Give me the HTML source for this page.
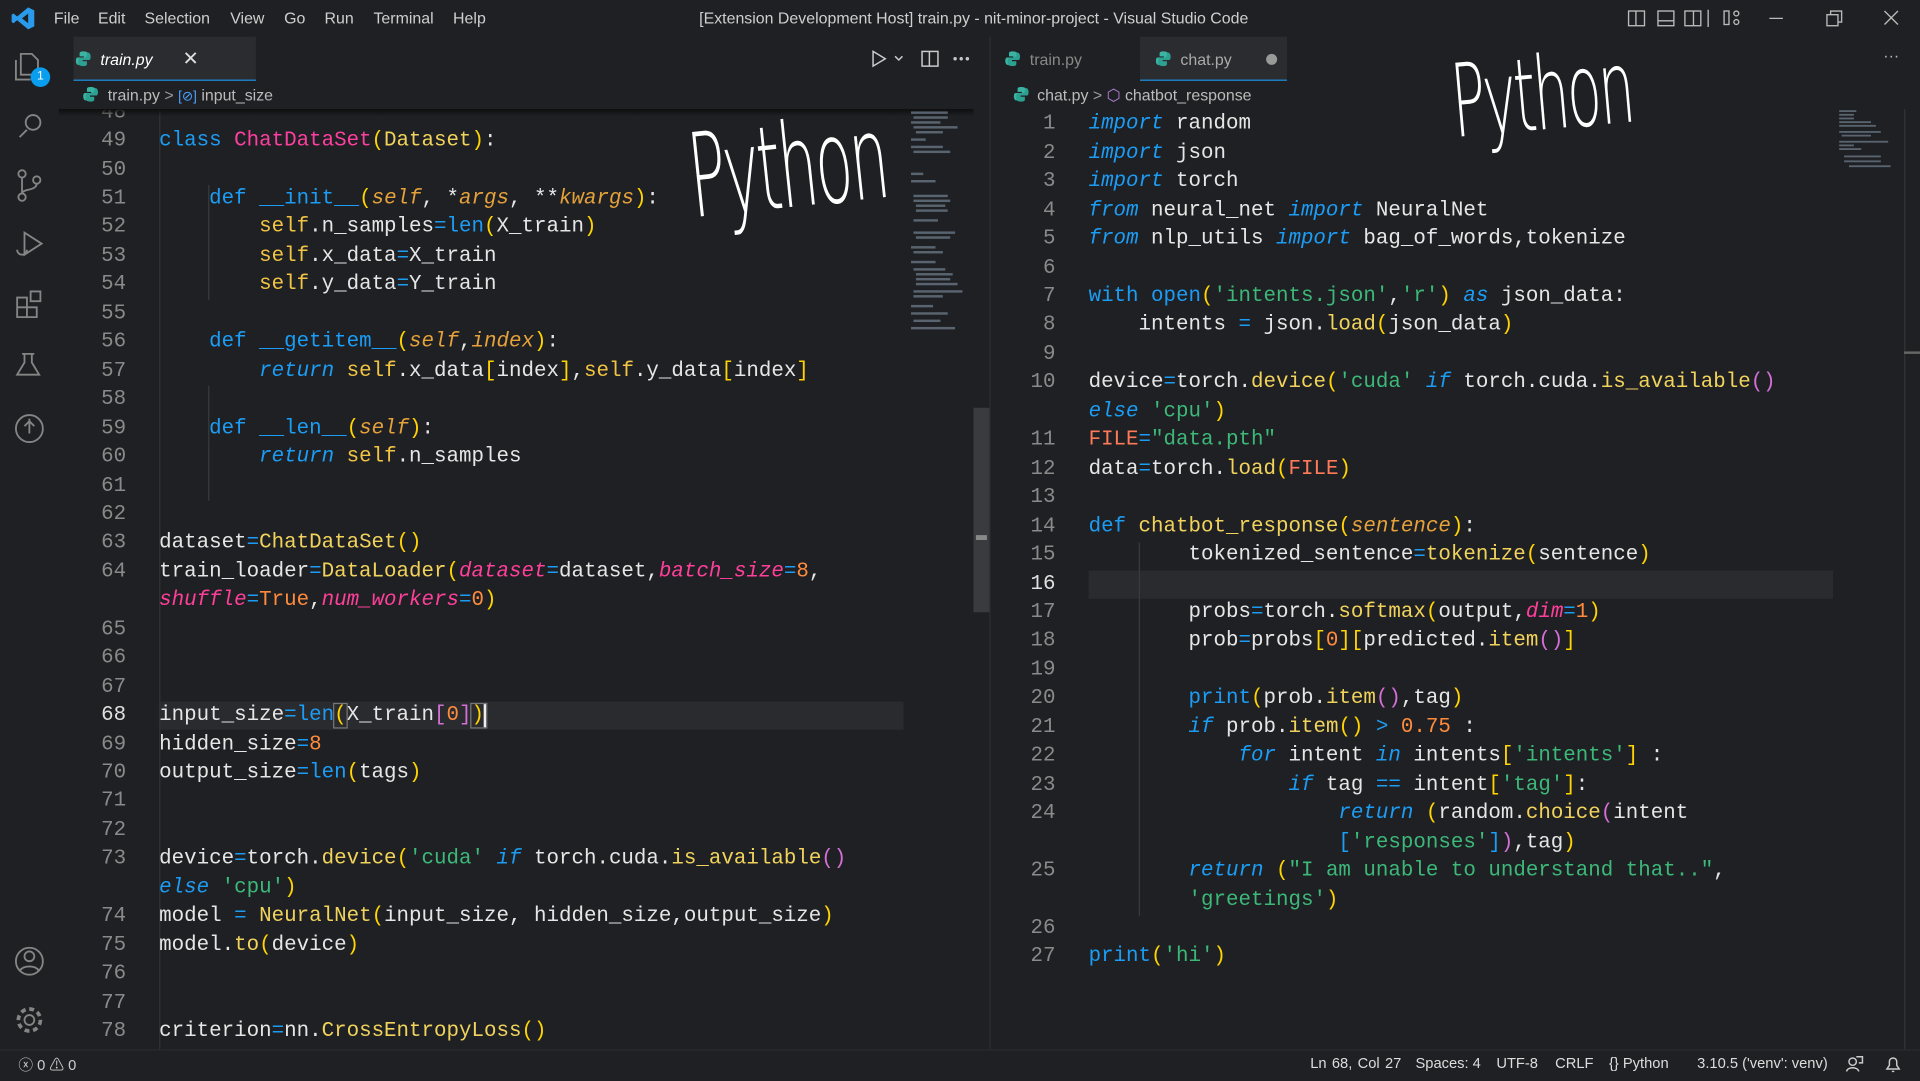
<!DOCTYPE html>
<html><head><meta charset="utf-8">
<style>
html,body{margin:0;padding:0;background:#1f2023;width:1920px;height:1080px;overflow:hidden}
#s{position:absolute;left:0;top:0;width:1568px;height:882px;transform:scale(1.22449);transform-origin:0 0;background:#1f2023;font-family:"Liberation Sans",sans-serif;color:#ccc}
.a{position:absolute}
.ui{font-size:13px;color:#cfcfcf}
pre{margin:0;font-family:"Liberation Mono",monospace;font-size:17px;line-height:23.45px;white-space:pre}
.ln{color:#8a8a8a;text-align:right}
.cur{color:#e0e0e0}
.code{color:#e6e6e6}
.k{color:#1c9df5}.ki{color:#1c9df5;font-style:italic}
.s{color:#f2c444}.p{color:#e6a23a;font-style:italic}
.c{color:#ff3fa0}.f{color:#f1d35c}.st{color:#3cb879}.n{color:#ff8b3d}
.kw{color:#ff3f9a;font-style:italic}.y{color:#ffd400}.m{color:#d36fd6}.b{color:#1c9df5}
.o{color:#1c9df5}.fi{color:#ff7a58}
.hw{font-family:"DejaVu Sans","Liberation Sans",sans-serif;color:#fff;font-weight:200;position:absolute;letter-spacing:-2px;transform-origin:0 0;line-height:1}
svg{position:absolute}
</style></head><body><div id="s">
<!-- title bar -->
<svg style="left:9px;top:5px" width="20" height="20" viewBox="0 0 20 20"><path d="M14 1 L19 3.5 V16.5 L14 19 L5 11.5 L2 14 L0.5 13 V7 L2 6 L5 8.5 Z M14 6 L9 10 L14 14 Z" fill="#2a9bea"/></svg>
<div class="a ui" style="left:44px;top:7px">File</div>
<div class="a ui" style="left:80px;top:7px">Edit</div>
<div class="a ui" style="left:118px;top:7px">Selection</div>
<div class="a ui" style="left:188px;top:7px">View</div>
<div class="a ui" style="left:232px;top:7px">Go</div>
<div class="a ui" style="left:265px;top:7px">Run</div>
<div class="a ui" style="left:305px;top:7px">Terminal</div>
<div class="a ui" style="left:370px;top:7px">Help</div>
<div class="a ui" style="left:571px;top:7px">[Extension Development Host] train.py - nit-minor-project - Visual Studio Code</div>
<svg style="left:1328px;top:7px" width="230" height="16" viewBox="0 0 230 16" fill="none" stroke="#bbb" stroke-width="1.1"><rect x="2" y="2" width="13" height="12"/><line x1="8" y1="2" x2="8" y2="14"/><rect x="26" y="2" width="13" height="12"/><line x1="26" y1="10" x2="39" y2="10"/><rect x="48" y="2" width="13" height="12"/><line x1="55" y1="2" x2="55" y2="14"/><line x1="67" y1="1" x2="67" y2="15"/><rect x="80" y="2" width="4" height="11"/><circle cx="90" cy="4" r="2"/><circle cx="90" cy="11" r="2"/><line x1="117" y1="8" x2="128" y2="8"/><rect x="164" y="5" width="9" height="9"/><path d="M167 5V2h9v9h-3"/><path d="M211 2l11 11M222 2l-11 11"/></svg>

<!-- activity bar -->
<svg style="left:0;top:30px" width="48" height="830" viewBox="0 0 48 830" fill="none" stroke="#858585" stroke-width="1.5">
<path d="M17 14h9l5 5v12H17z M13 19v16h12"/>
<circle cx="27" cy="70" r="6"/><path d="M22 76l-6 6"/>
<circle cx="18" cy="112" r="3"/><circle cx="18" cy="131" r="3"/><circle cx="30" cy="117" r="3"/><path d="M18 115v13M30 120c0 6-12 4-12 8"/>
<path d="M20 160l14 9-14 9z M14 174a4 4 0 1 0 8 0"/>
<path d="M14 213h8v8h-8z M14 221h8v8h-8z M22 221h8v8h-8z M25 208h8v8h-8z"/>
<path d="M20 259v7l-6 10h18l-6-10v-7 M18 259h10"/>
<circle cx="24" cy="320" r="11"/><path d="M24 312v12M20 318l4 -4 4 4"/>
<circle cx="24" cy="755" r="11"/><circle cx="24" cy="751" r="4"/><path d="M16 763c3-5 13-5 16 0"/>
<circle cx="24" cy="803" r="4"/><circle cx="24" cy="803" r="9" stroke-dasharray="4 3" stroke-width="3"/>
</svg>
<div class="a" style="left:25px;top:55px;width:16px;height:16px;border-radius:8px;background:#0a9ef0;color:#fff;font-size:10px;text-align:center;line-height:16px">1</div>

<!-- left editor -->
<div class="a" style="left:48px;top:89px;width:690px;height:768px;overflow:hidden">
 <div class="a" style="left:82px;top:484px;width:608px;height:23px;background:#2a2b2f"></div>
 <div class="a" style="left:82px;top:0;width:1px;height:768px;background:#333"></div>
 <div class="a" style="left:122px;top:62px;width:1px;height:94px;background:#3a3a3a"></div>
 <div class="a" style="left:122px;top:226px;width:1px;height:47px;background:#3a3a3a"></div>
 <div class="a" style="left:122px;top:273px;width:1px;height:47px;background:#3a3a3a"></div>
 <pre class="a ln" style="left:0;top:-8.4px;width:55px">48
49
50
51
52
53
54
55
56
57
58
59
60
61
62
63
64

65
66
67
<span class="cur">68</span>
69
70
71
72
73

74
75
76
77
78</pre>
<pre class="a code" style="left:82px;top:-8.4px">

<span class="k">class</span> <span class="c">ChatDataSet</span><span class="y">(</span><span class="f">Dataset</span><span class="y">)</span>:

    <span class="k">def</span> <span class="k">__init__</span><span class="y">(</span><span class="p">self</span>, *<span class="p">args</span>, **<span class="p">kwargs</span><span class="y">)</span>:
        <span class="s">self</span>.n_samples<span class="o">=</span><span class="k">len</span><span class="y">(</span>X_train<span class="y">)</span>
        <span class="s">self</span>.x_data<span class="o">=</span>X_train
        <span class="s">self</span>.y_data<span class="o">=</span>Y_train

    <span class="k">def</span> <span class="k">__getitem__</span><span class="y">(</span><span class="p">self</span>,<span class="p">index</span><span class="y">)</span>:
        <span class="ki">return</span> <span class="s">self</span>.x_data<span class="y">[</span>index<span class="y">]</span>,<span class="s">self</span>.y_data<span class="y">[</span>index<span class="y">]</span>

    <span class="k">def</span> <span class="k">__len__</span><span class="y">(</span><span class="p">self</span><span class="y">)</span>:
        <span class="ki">return</span> <span class="s">self</span>.n_samples


dataset<span class="o">=</span><span class="f">ChatDataSet</span><span class="y">()</span>
train_loader<span class="o">=</span><span class="f">DataLoader</span><span class="y">(</span><span class="kw">dataset</span><span class="o">=</span>dataset,<span class="kw">batch_size</span><span class="o">=</span><span class="n">8</span>,
<span class="kw">shuffle</span><span class="o">=</span><span class="n">True</span>,<span class="kw">num_workers</span><span class="o">=</span><span class="n">0</span><span class="y">)</span>



input_size<span class="o">=</span><span class="k">len</span><span class="y" style="outline:1px solid #777">(</span>X_train<span class="m">[</span><span class="n">0</span><span class="m">]</span><span class="y" style="outline:1px solid #777;border-right:2px solid #eee">)</span>
hidden_size<span class="o">=</span><span class="n">8</span>
output_size<span class="o">=</span><span class="k">len</span><span class="y">(</span>tags<span class="y">)</span>


device<span class="o">=</span>torch.<span class="f">device</span><span class="y">(</span><span class="st">'cuda'</span> <span class="ki">if</span> torch.cuda.<span class="f">is_available</span><span class="m">()</span>
<span class="ki">else</span> <span class="st">'cpu'</span><span class="y">)</span>
model <span class="o">=</span> <span class="f">NeuralNet</span><span class="y">(</span>input_size, hidden_size,output_size<span class="y">)</span>
model.<span class="f">to</span><span class="y">(</span>device<span class="y">)</span>


criterion<span class="o">=</span>nn.<span class="f">CrossEntropyLoss</span><span class="y">()</span></pre>
</div>
<div class="a" style="left:48px;top:89px;width:747px;height:6px;background:linear-gradient(#0e0e10,#1f202300)"></div>

<!-- left tabs -->
<div class="a" style="left:60px;top:30px;width:149px;height:36px;background:#2b2c30;border-bottom:1px solid #1c8fe0;box-sizing:border-box"></div>
<svg style="left:61px;top:41px" width="14" height="14" viewBox="0 0 14 14"><path d="M7 1C4 1 4 2 4 3v2h3.5v1H2.5C1 6 1 8 1 9s.5 3 2 3h1v-2c0-1 1-2 2-2h3c1 0 2-1 2-2V3c0-1-1-2-4-2z" fill="#3bb3a2"/><path d="M7 13c3 0 3-1 3-2V9H6.5V8H11.5c1.5 0 1.5-2 1.5-3s-.5-3-2-3h-1v2c0 1-1 2-2 2H5c-1 0-2 1-2 2v3c0 1 1 2 4 2z" fill="#2ca192"/></svg>
<div class="a" style="left:82px;top:41px;font-size:13px;color:#fff;font-style:italic">train.py</div>
<div class="a" style="left:149px;top:38px;font-size:16px;color:#ddd">✕</div>
<svg style="left:710px;top:40px" width="90" height="16" viewBox="0 0 90 16" fill="none" stroke="#ccc" stroke-width="1.2"><path d="M3 2l10 6-10 6z"/><path d="M21 6l3 3 3-3"/><rect x="43" y="2" width="13" height="12"/><line x1="49" y1="2" x2="49" y2="14"/><circle cx="70" cy="8" r=".8"/><circle cx="75" cy="8" r=".8"/><circle cx="80" cy="8" r=".8"/></svg>
<!-- breadcrumb left -->
<svg style="left:67px;top:70px" width="14" height="14" viewBox="0 0 14 14"><path d="M7 1C4 1 4 2 4 3v2h3.5v1H2.5C1 6 1 8 1 9s.5 3 2 3h1v-2c0-1 1-2 2-2h3c1 0 2-1 2-2V3c0-1-1-2-4-2z" fill="#3bb3a2"/><path d="M7 13c3 0 3-1 3-2V9H6.5V8H11.5c1.5 0 1.5-2 1.5-3s-.5-3-2-3h-1v2c0 1-1 2-2 2H5c-1 0-2 1-2 2v3c0 1 1 2 4 2z" fill="#2ca192"/></svg>
<div class="a" style="left:88px;top:70px;font-size:13px;color:#bbb">train.py <span style="color:#999">&gt;</span> <span style="color:#4aa3ff;font-size:11px">[⊘]</span> input_size</div>

<!-- left minimap -->
<svg style="left:742px;top:89px" width="54" height="190" viewBox="0 0 54 190">
<g fill="#6d7b8a" opacity=".75"><rect x="2" y="2" width="30" height="2"/><rect x="4" y="6" width="28" height="2"/><rect x="2" y="10" width="24" height="2"/><rect x="4" y="14" width="36" height="2"/><rect x="6" y="18" width="22" height="2"/><rect x="2" y="24" width="12" height="2"/><rect x="2" y="30" width="26" height="2"/><rect x="4" y="34" width="30" height="2"/><rect x="2" y="52" width="10" height="2"/><rect x="2" y="58" width="20" height="2"/><rect x="4" y="70" width="28" height="2"/><rect x="4" y="74" width="30" height="2"/><rect x="6" y="78" width="24" height="2"/><rect x="6" y="82" width="26" height="2"/><rect x="4" y="90" width="20" height="2"/><rect x="4" y="100" width="34" height="2"/><rect x="6" y="104" width="28" height="2"/><rect x="2" y="112" width="20" height="2"/><rect x="4" y="116" width="24" height="2"/><rect x="2" y="124" width="20" height="2"/><rect x="4" y="130" width="26" height="2"/><rect x="6" y="134" width="30" height="2"/><rect x="6" y="138" width="28" height="2"/><rect x="6" y="142" width="34" height="2"/><rect x="4" y="148" width="40" height="2"/><rect x="4" y="152" width="24" height="2"/><rect x="2" y="160" width="18" height="2"/><rect x="2" y="166" width="30" height="2"/><rect x="4" y="172" width="22" height="2"/><rect x="2" y="178" width="36" height="2"/></g></svg>
<div class="a" style="left:795px;top:333px;width:13px;height:167px;background:#3a3b3e"></div>
<div class="a" style="left:797px;top:437px;width:9px;height:4px;background:#888"></div>
<div class="a" style="left:808px;top:30px;width:1px;height:827px;background:#2e2f32"></div>

<!-- right tabs -->
<svg style="left:820px;top:41px" width="14" height="14" viewBox="0 0 14 14"><path d="M7 1C4 1 4 2 4 3v2h3.5v1H2.5C1 6 1 8 1 9s.5 3 2 3h1v-2c0-1 1-2 2-2h3c1 0 2-1 2-2V3c0-1-1-2-4-2z" fill="#3bb3a2"/><path d="M7 13c3 0 3-1 3-2V9H6.5V8H11.5c1.5 0 1.5-2 1.5-3s-.5-3-2-3h-1v2c0 1-1 2-2 2H5c-1 0-2 1-2 2v3c0 1 1 2 4 2z" fill="#2ca192"/></svg>
<div class="a" style="left:841px;top:41px;font-size:13px;color:#888">train.py</div>
<div class="a" style="left:931px;top:30px;width:120px;height:36px;background:#2b2c30;border-bottom:1px solid #1c8fe0;box-sizing:border-box"></div>
<svg style="left:943px;top:41px" width="14" height="14" viewBox="0 0 14 14"><path d="M7 1C4 1 4 2 4 3v2h3.5v1H2.5C1 6 1 8 1 9s.5 3 2 3h1v-2c0-1 1-2 2-2h3c1 0 2-1 2-2V3c0-1-1-2-4-2z" fill="#3bb3a2"/><path d="M7 13c3 0 3-1 3-2V9H6.5V8H11.5c1.5 0 1.5-2 1.5-3s-.5-3-2-3h-1v2c0 1-1 2-2 2H5c-1 0-2 1-2 2v3c0 1 1 2 4 2z" fill="#2ca192"/></svg>
<div class="a" style="left:964px;top:41px;font-size:13px;color:#aaa">chat.py</div>
<div class="a" style="left:1034px;top:44px;width:9px;height:9px;border-radius:5px;background:#999"></div>
<div class="a" style="left:1538px;top:38px;font-size:13px;color:#bbb">···</div>
<svg style="left:827px;top:70px" width="14" height="14" viewBox="0 0 14 14"><path d="M7 1C4 1 4 2 4 3v2h3.5v1H2.5C1 6 1 8 1 9s.5 3 2 3h1v-2c0-1 1-2 2-2h3c1 0 2-1 2-2V3c0-1-1-2-4-2z" fill="#3bb3a2"/><path d="M7 13c3 0 3-1 3-2V9H6.5V8H11.5c1.5 0 1.5-2 1.5-3s-.5-3-2-3h-1v2c0 1-1 2-2 2H5c-1 0-2 1-2 2v3c0 1 1 2 4 2z" fill="#2ca192"/></svg>
<div class="a" style="left:847px;top:70px;font-size:13px;color:#bbb">chat.py <span style="color:#999">&gt;</span> <span style="color:#b180d7">⬡</span> chatbot_response</div>

<!-- right editor -->
<div class="a" style="left:810px;top:89px;width:690px;height:768px;overflow:hidden">
 <div class="a" style="left:79px;top:376.5px;width:608px;height:23px;background:#2a2b2f"></div>
 <div class="a" style="left:120px;top:354px;width:1px;height:305px;background:#3a3a3a"></div>
 <pre class="a ln" style="left:0;top:1.3px;width:52px">1
2
3
4
5
6
7
8
9
10

11
12
13
14
15
<span class="cur">16</span>
17
18
19
20
21
22
23
24

25

26
27</pre>
<pre class="a code" style="left:79px;top:1.3px"><span class="ki">import</span> random
<span class="ki">import</span> json
<span class="ki">import</span> torch
<span class="ki">from</span> neural_net <span class="ki">import</span> NeuralNet
<span class="ki">from</span> nlp_utils <span class="ki">import</span> bag_of_words,tokenize

<span class="k">with</span> <span class="k">open</span><span class="y">(</span><span class="st">'intents.json'</span>,<span class="st">'r'</span><span class="y">)</span> <span class="ki">as</span> json_data:
    intents <span class="o">=</span> json.<span class="f">load</span><span class="y">(</span>json_data<span class="y">)</span>

device<span class="o">=</span>torch.<span class="f">device</span><span class="y">(</span><span class="st">'cuda'</span> <span class="ki">if</span> torch.cuda.<span class="f">is_available</span><span class="m">()</span>
<span class="ki">else</span> <span class="st">'cpu'</span><span class="y">)</span>
<span class="fi">FILE</span><span class="o">=</span><span class="st">"data.pth"</span>
data<span class="o">=</span>torch.<span class="f">load</span><span class="y">(</span><span class="fi">FILE</span><span class="y">)</span>

<span class="k">def</span> <span class="f">chatbot_response</span><span class="y">(</span><span class="p">sentence</span><span class="y">)</span>:
        tokenized_sentence<span class="o">=</span><span class="f">tokenize</span><span class="y">(</span>sentence<span class="y">)</span>

        probs<span class="o">=</span>torch.<span class="f">softmax</span><span class="y">(</span>output,<span class="kw">dim</span><span class="o">=</span><span class="n">1</span><span class="y">)</span>
        prob<span class="o">=</span>probs<span class="y">[</span><span class="n">0</span><span class="y">][</span>predicted.<span class="f">item</span><span class="m">()</span><span class="y">]</span>

        <span class="k">print</span><span class="y">(</span>prob.<span class="f">item</span><span class="m">()</span>,tag<span class="y">)</span>
        <span class="ki">if</span> prob.<span class="f">item</span><span class="y">()</span> <span class="o">&gt;</span> <span class="n">0.75</span> :
            <span class="ki">for</span> intent <span class="ki">in</span> intents<span class="y">[</span><span class="st">'intents'</span><span class="y">]</span> :
                <span class="ki">if</span> tag <span class="o">==</span> intent<span class="y">[</span><span class="st">'tag'</span><span class="y">]</span>:
                    <span class="ki">return</span> <span class="y">(</span>random.<span class="f">choice</span><span class="m">(</span>intent
                    <span class="b">[</span><span class="st">'responses'</span><span class="b">]</span><span class="m">)</span>,tag<span class="y">)</span>
        <span class="ki">return</span> <span class="y">(</span><span class="st">"I am unable to understand that.."</span>,
        <span class="st">'greetings'</span><span class="y">)</span>

<span class="k">print</span><span class="y">(</span><span class="st">'hi'</span><span class="y">)</span></pre>
</div>
<svg style="left:1500px;top:89px" width="56" height="50" viewBox="0 0 56 50"><g fill="#6d7b8a" opacity=".75"><rect x="2" y="1" width="14" height="1.5"/><rect x="2" y="4" width="12" height="1.5"/><rect x="2" y="7" width="12" height="1.5"/><rect x="2" y="10" width="26" height="1.5"/><rect x="2" y="13" width="30" height="1.5"/><rect x="2" y="18" width="34" height="1.5"/><rect x="4" y="21" width="24" height="1.5"/><rect x="2" y="26" width="40" height="1.5"/><rect x="2" y="29" width="12" height="1.5"/><rect x="2" y="32" width="18" height="1.5"/><rect x="6" y="38" width="30" height="1.5"/><rect x="6" y="42" width="30" height="1.5"/><rect x="10" y="46" width="34" height="1.5"/></g></svg>
<div class="a" style="left:1555px;top:89px;width:1px;height:768px;background:#333"></div>
<div class="a" style="left:1555px;top:287px;width:13px;height:2px;background:#666"></div>

<!-- handwriting -->
<div class="hw" style="left:558px;top:98px;font-size:50px;transform:rotate(-6deg) scale(1,1.9)">Python</div>
<div class="hw" style="left:1182px;top:42px;font-size:46px;transform:rotate(-5deg) scale(1,1.8)">Python</div>

<!-- status bar -->
<div class="a" style="left:0;top:857px;width:1568px;height:25px;background:#1f2023;border-top:1px solid #2a2b2e"></div>
<div class="a" style="left:15px;top:861px;font-size:12px;color:#ccc">ⓧ 0 ⚠ 0</div>
<div class="a" style="left:1070px;top:861px;font-size:12px;color:#ddd;word-spacing:1px">Ln 68, Col 27</div>
<div class="a" style="left:1156px;top:861px;font-size:12px;color:#ddd">Spaces: 4</div>
<div class="a" style="left:1222px;top:861px;font-size:12px;color:#ddd">UTF-8</div>
<div class="a" style="left:1270px;top:861px;font-size:12px;color:#ddd">CRLF</div>
<div class="a" style="left:1314px;top:861px;font-size:12px;color:#ddd">{} Python</div>
<div class="a" style="left:1386px;top:861px;font-size:12px;color:#ddd">3.10.5 ('venv': venv)</div>
<svg style="left:1506px;top:860px" width="55" height="18" viewBox="0 0 55 18" fill="none" stroke="#ccc" stroke-width="1.2"><circle cx="7" cy="7" r="3"/><path d="M2 15c1-4 9-4 10 0M10 3h5v5h-3"/><path d="M35 13h10l-2-3V7a3 3 0 0 0-6 0v3z M39 15h2"/></svg>
</div></body></html>
